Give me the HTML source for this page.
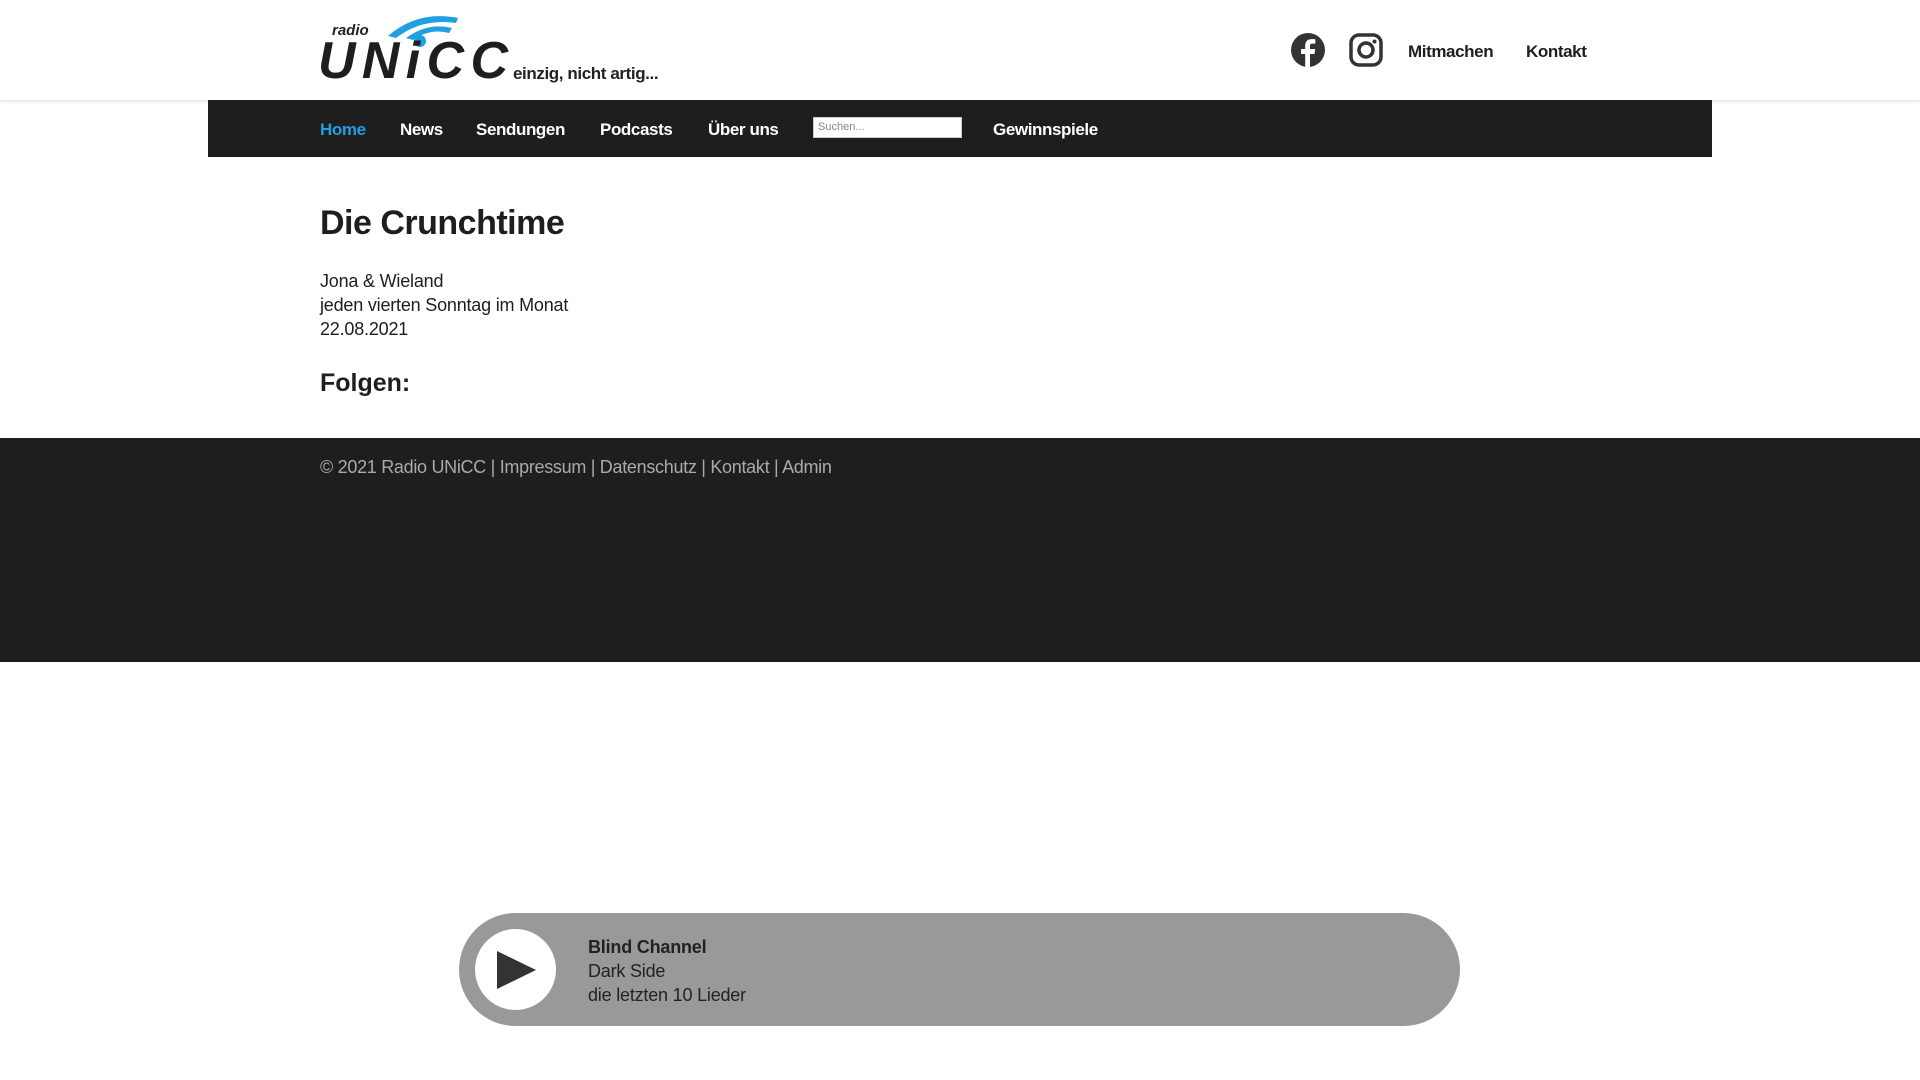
<!DOCTYPE html>
<html><head><meta charset="utf-8"><style>
*{margin:0;padding:0;box-sizing:border-box}
body{width:1920px;height:1080px;background:#fff;font-family:"Liberation Sans",Arial,sans-serif;color:#1e1e1e;position:relative;overflow:hidden}
.hdr{position:absolute;left:0;top:0;width:1920px;height:100px;background:#fff;box-shadow:0 1px 4px rgba(0,0,0,.15)}
.abs{position:absolute;white-space:nowrap}
.nav{position:absolute;left:208px;top:100px;width:1504px;height:57px;background:#1e1e1e}
.nav span{position:absolute;top:20px;color:#fff;font-weight:bold;font-size:17px;letter-spacing:-0.4px}
.foot{position:absolute;left:0;top:438px;width:1920px;height:224px;background:#1e1e1e}
</style></head><body>
<div class="hdr">
<svg class="abs" style="left:318px;top:14px" width="192" height="68" viewBox="0 0 192 68">
<path d="M70 22 Q100 -4 140 4 L138 9 Q104 4 78 24Z" fill="#1fa0e0"/>
<path d="M88 24 Q110 8 134 14 L131 19 Q112 14 95 26Z" fill="#1fa0e0"/>
<circle cx="102" cy="27" r="6" fill="#1fa0e0"/>
<text x="14" y="21" font-family="Liberation Sans" font-style="italic" font-weight="bold" font-size="15" fill="#222">radio</text>
<text x="0" y="64" font-family="Liberation Sans" font-style="italic" font-weight="bold" font-size="52" fill="#1e1e1e" letter-spacing="-2" textLength="188">UNiCC</text>
</svg>
<div class="abs" style="left:513px;top:64px;font-size:17px;font-weight:bold;color:#222;letter-spacing:-0.4px">einzig, nicht artig...</div>
<svg class="abs" style="left:1291px;top:33px" width="34" height="34" viewBox="0 0 34 34"><circle cx="17" cy="17" r="17" fill="#333"/><path d="M19 34V21h4.5l.7-5H19v-3c0-1.4.5-2.4 2.5-2.4H24.3V6.3c-.5-.1-2-.2-3.8-.2-3.8 0-6.3 2.3-6.3 6.5V16H10v5h4.2v13z" fill="#fff"/></svg>
<svg class="abs" style="left:1349px;top:33px" width="34" height="34" viewBox="0 0 34 34"><rect x="2" y="2" width="30" height="30" rx="8" fill="none" stroke="#333" stroke-width="3.5"/><circle cx="17" cy="17" r="7" fill="none" stroke="#333" stroke-width="3.5"/><circle cx="25.5" cy="8.5" r="2" fill="#333"/></svg>
<div class="abs" style="left:1408px;top:42px;font-size:17px;font-weight:bold;letter-spacing:-0.4px">Mitmachen</div>
<div class="abs" style="left:1526px;top:42px;font-size:17px;font-weight:bold;letter-spacing:-0.4px">Kontakt</div>
</div>
<div class="nav">
<span style="left:112px;color:#1fa0e0">Home</span>
<span style="left:192px">News</span>
<span style="left:268px">Sendungen</span>
<span style="left:392px">Podcasts</span>
<span style="left:500px">Über uns</span>
<div style="position:absolute;left:605px;top:17px;width:149px;height:21px;background:#fff;border:1px solid #ccc;font-size:11px;color:#888;padding:3px 4px">Suchen...</div>
<span style="left:785px">Gewinnspiele</span>
</div>
<div class="abs" style="left:320px;top:204px;font-size:34px;font-weight:bold;letter-spacing:-0.5px">Die Crunchtime</div>
<div class="abs" style="left:320px;top:269px;font-size:18px;line-height:24px;letter-spacing:-0.2px">Jona &amp; Wieland<br>jeden vierten Sonntag im Monat<br>22.08.2021</div>
<div class="abs" style="left:320px;top:369px;font-size:25px;font-weight:bold">Folgen:</div>
<div class="foot"><div class="abs" style="left:320px;top:19px;font-size:18px;color:#aaa;letter-spacing:-0.3px">© 2021 Radio UNiCC | Impressum | Datenschutz | Kontakt | Admin</div></div>
<div class="abs" style="left:459px;top:913px;width:1001px;height:113px;border-radius:57px;background:#999">
<div style="position:absolute;left:16px;top:16px;width:81px;height:81px;border-radius:50%;background:#fff"></div>
<svg style="position:absolute;left:36px;top:36px" width="42" height="42" viewBox="0 0 42 42"><path d="M2 2 L41 21 L2 40Z" fill="#333"/></svg>
<div style="position:absolute;left:129px;top:22px;font-size:18px;line-height:24px;color:#222;letter-spacing:-0.2px"><b>Blind Channel</b><br>Dark Side<br>die letzten 10 Lieder</div>
</div>
</body></html>
